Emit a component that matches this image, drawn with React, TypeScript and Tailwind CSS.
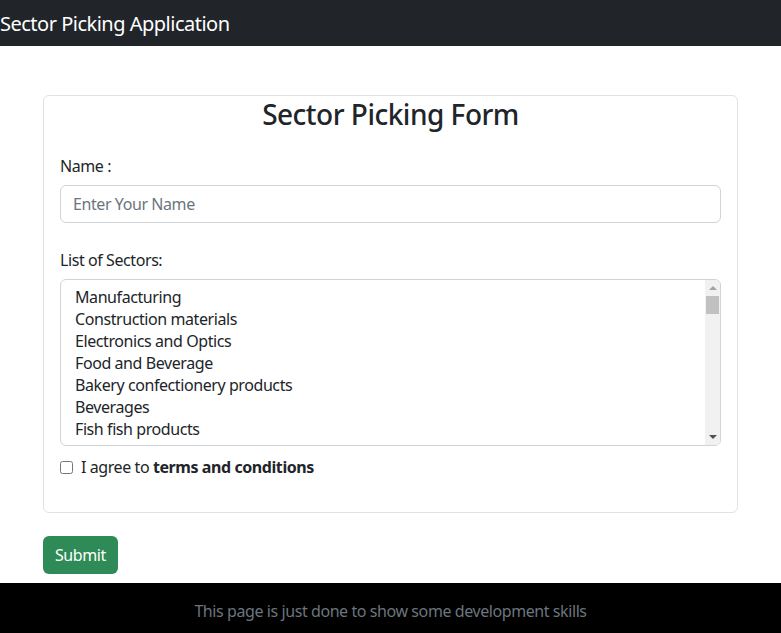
import { useState } from 'react'

const sectors = [
  'Manufacturing',
  'Construction materials',
  'Electronics and Optics',
  'Food and Beverage',
  'Bakery confectionery products',
  'Beverages',
  'Fish fish products',
  'Meat meat products',
]

export default function App() {
  const [agree, setAgree] = useState(false)

  return (
    <div className="min-h-[633px] bg-white text-[#212529] font-['Noto_Sans',sans-serif] text-[16px] tracking-[-0.42px] flex flex-col">
      {/* Navbar */}
      <nav className="h-[46px] bg-[#212529] flex items-center pt-[2px]">
        <span className="text-[20px] text-white leading-none tracking-[-0.5px]">Sector Picking Application</span>
      </nav>

      <main className="px-[43px] pt-[49px]">
        {/* Form card */}
        <div className="border border-[#dee2e6] rounded-[6px] px-[16px] pb-[17px]">
          <h2 className="text-[28px] leading-[34px] font-medium text-center mt-[1px] tracking-[-0.5px]">Sector Picking Form</h2>

          <label className="block mt-[23px] leading-[24px]">Name :</label>
          <input
            className="mt-[7px] block w-full h-[38px] border border-[#ced4da] rounded-[6px] px-[12px] outline-none placeholder:text-[#6c757d]"
            placeholder="Enter Your Name"
          />

          <label className="block mt-[25px] leading-[24px]">List of Sectors:</label>
          <div className="mt-[7px] h-[167px] border border-[#ced4da] rounded-[6px] flex overflow-hidden">
            <ul className="flex-1 pl-[14px] pt-[6px] overflow-hidden">
              {sectors.map((s) => (
                <li key={s} className="leading-[22px]">{s}</li>
              ))}
            </ul>
            {/* Scrollbar */}
            <div className="w-[15px] bg-[#f1f1f1] flex flex-col items-center">
              <div className="h-[16px] flex items-center justify-center">
                <div className="w-0 h-0 border-l-[4px] border-r-[4px] border-b-[4px] border-l-transparent border-r-transparent border-b-[#a3a3a3]" />
              </div>
              <div className="w-[13px] h-[18px] bg-[#c1c1c1]" />
              <div className="flex-1" />
              <div className="h-[16px] flex items-center justify-center">
                <div className="w-0 h-0 border-l-[4px] border-r-[4px] border-t-[4px] border-l-transparent border-r-transparent border-t-[#505050]" />
              </div>
            </div>
          </div>

          <label className="flex items-center mt-[9px] leading-[24px] pb-[16px]">
            <input
              type="checkbox"
              checked={agree}
              onChange={() => setAgree(!agree)}
              className="w-[13px] h-[13px] m-0"
            />
            <span className="ml-[8px]">
              I agree to <b className="font-bold">terms and conditions</b>
            </span>
          </label>
        </div>

        <button className="mt-[23px] h-[38px] px-[12px] rounded-[6px] bg-[#2e8b57] text-white">Submit</button>
      </main>

      {/* Footer */}
      <footer className="mt-[9px] h-[50px] bg-black flex items-center justify-center pt-[6px]">
        <span className="text-[#6c757d]">This page is just done to show some development skills</span>
      </footer>
    </div>
  )
}
